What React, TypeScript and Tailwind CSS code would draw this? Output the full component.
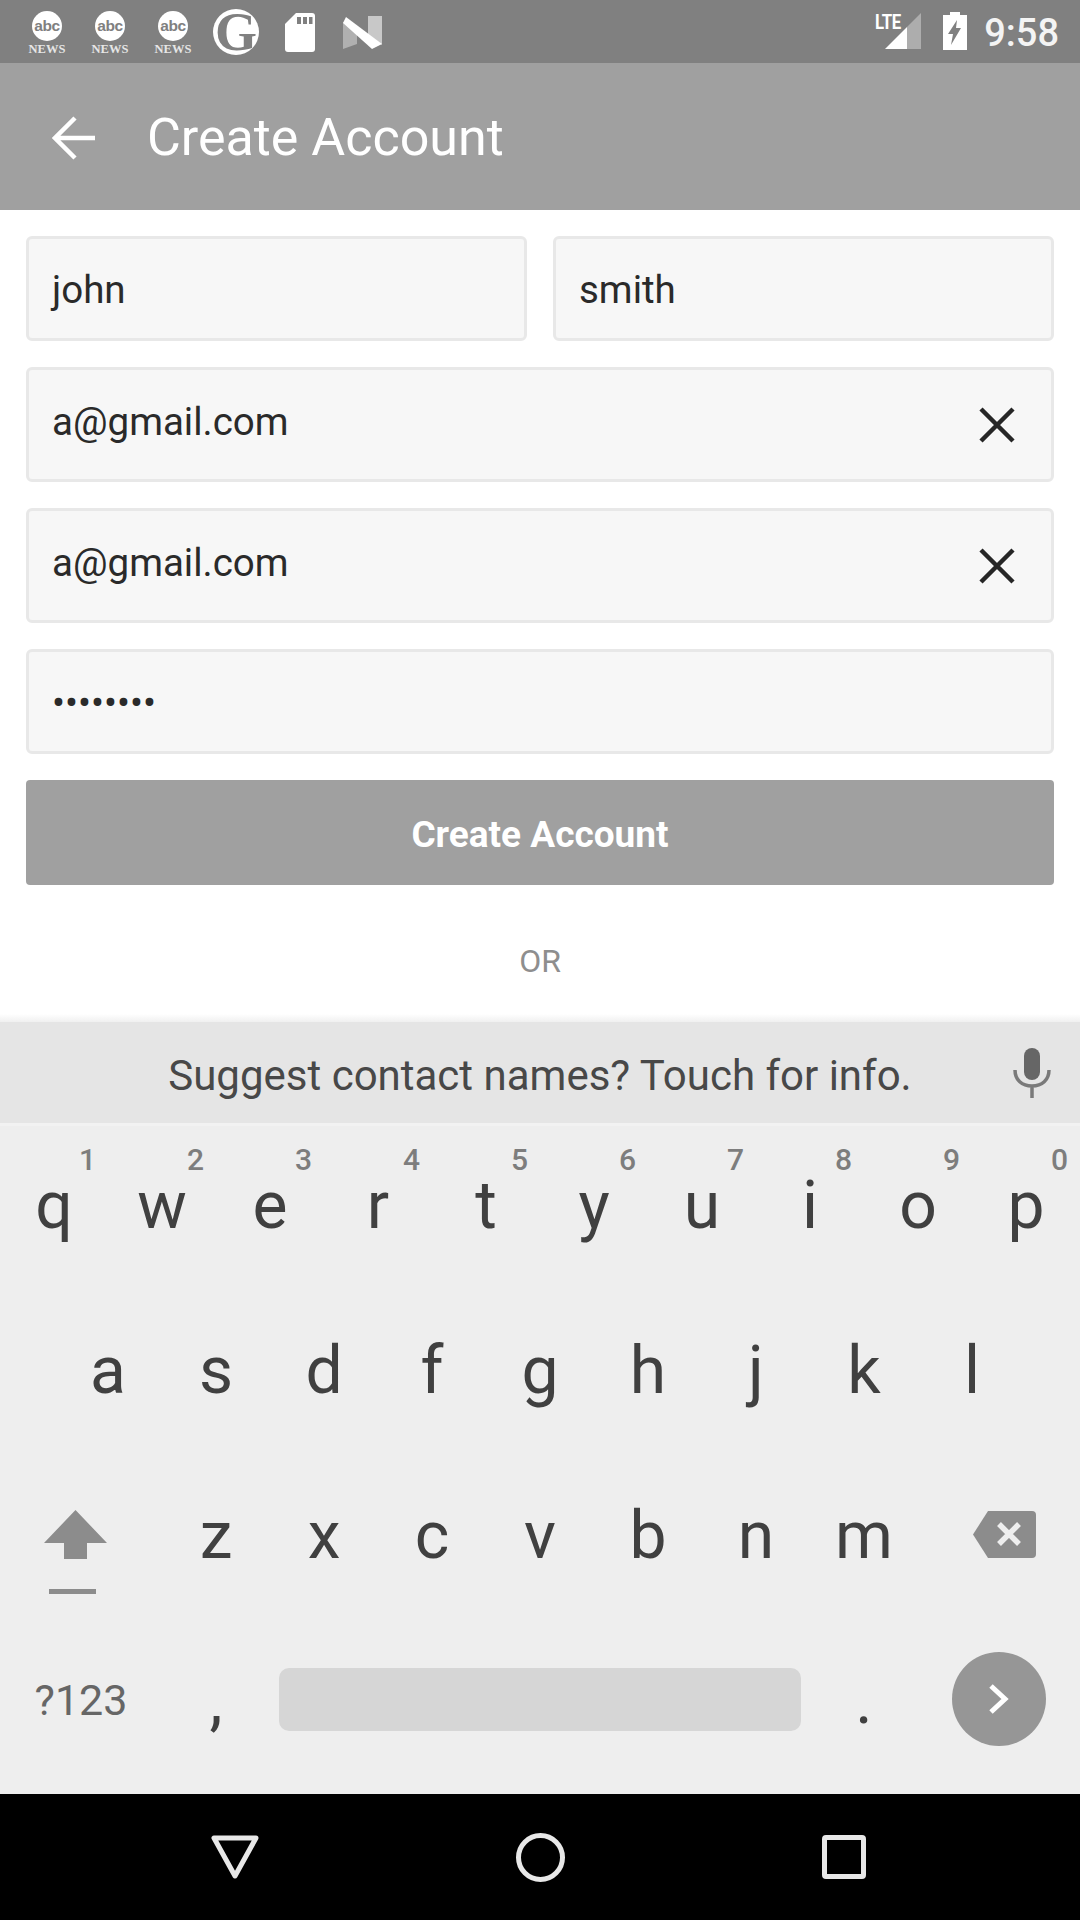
import React from "react";

const Abc = ({ className }: { className?: string }) => (
  <svg width="38" height="48" viewBox="0 0 38 48" className={className}>
    <circle cx="19" cy="15" r="15" fill="#fff" />
    <text x="19" y="20" textAnchor="middle" fontFamily="'Liberation Sans', sans-serif" fontWeight="700" fontSize="15.5" letterSpacing="-0.4" fill="#808080">abc</text>
    <text x="19" y="42" textAnchor="middle" fontFamily="'Liberation Serif', serif" fontSize="12.500" fontWeight="700" fill="#e6e6e6">NEWS</text>
  </svg>
);

const Guardian = () => (
  <svg width="64" height="64" viewBox="0 0 64 64" className="-m-[9px]">
    <circle cx="32" cy="32" r="23" fill="#fff" />
    <text x="32" y="50" textAnchor="middle" fontFamily="'Liberation Serif', serif" fontWeight="700" fontSize="54" fill="#808080">G</text>
  </svg>
);

const Sd = () => (
  <svg width="32" height="40" viewBox="0 0 32 40">
    <path d="M12 0H28a3 3 0 0 1 3 3V36a3 3 0 0 1-3 3H4a3 3 0 0 1-3-3V11Z" fill="#fff" />
    <path d="M13 4h4v7h-4zM19 4h4v7h-4zM25 4h3.500v7H25z" fill="#808080" />
  </svg>
);

const Nougat = () => (
  <svg width="39" height="34" viewBox="0 0 39 34">
    <path d="M0 6V33L14 28V12Z" fill="#b0b0b0" />
    <path d="M25 0L39 0V29L25 19Z" fill="#cfcfcf" opacity="0.9" />
    <path d="M3 1 L39 28 L29 33 L0 7Z" fill="#fff" />
  </svg>
);

const Signal = () => (
  <div className="relative w-[46px] h-[38px]">
    <span className="absolute left-[-1px] top-0 font-['Roboto'] text-[21px] leading-[18px] font-bold text-white scale-x-[0.8] origin-left tracking-tight">LTE</span>
    <svg width="36" height="36" viewBox="0 0 36 36" className="absolute left-[9px] top-0">
      <path d="M36 0V36H22V14Z" fill="#adadad" />
      <path d="M22 14V36H0Z" fill="#fff" />
    </svg>
  </div>
);

const Battery = () => (
  <svg width="24" height="38" viewBox="0 0 24 38">
    <path d="M7 0H17V3H24V38H0V3H7Z" fill="#fff" />
    <path d="M14 8L5 22H10L8 33L18 16H13Z" fill="#808080" />
  </svg>
);

const Clear = () => (
  <svg width="36" height="36" viewBox="0 0 36 36" className="shrink-0">
    <path d="M2 2L34 34M34 2L2 34" stroke="#262626" strokeWidth="4.500" fill="none" />
  </svg>
);

const Field = ({ value, height, clear, className, textClass }: { value: string; height: string; clear?: boolean; className?: string; textClass: string }) => (
  <div className={`flex items-center justify-between border-[3px] border-[#e8e8e8] bg-[#f7f7f7] rounded-[6px] pl-[23px] pr-[36px] font-['Roboto'] text-[38.5px] text-[#2a2a2a] ${height} ${className ?? ""}`}>
    <span className={`leading-none ${textClass}`}>{value}</span>
    {clear && <Clear />}
  </div>
);

const Key = ({ label, hint }: { label: string; hint?: string }) => (
  <div className="relative flex justify-center h-[165px] w-[108px] shrink-0">
    {hint && (
      <span className="absolute top-[19px] right-[12px] font-['Roboto'] text-[30px] leading-none font-medium text-[#7d7d7d]">{hint}</span>
    )}
    <span className="font-['Roboto'] text-[66px] leading-none text-[#404040] mt-[47px]">{label}</span>
  </div>
);

const row1 = [
  ["q", "1"], ["w", "2"], ["e", "3"], ["r", "4"], ["t", "5"],
  ["y", "6"], ["u", "7"], ["i", "8"], ["o", "9"], ["p", "0"],
];

export default function App() {
  return (
    <div className="w-[1080px] h-[1920px] flex flex-col bg-white overflow-hidden">
      {/* status bar */}
      <div className="h-[63px] bg-[#808080] flex items-start justify-between shrink-0">
        <div className="flex items-start">
          <Abc className="ml-[28px] mt-[11px]" />
          <Abc className="ml-[25px] mt-[11px]" />
          <Abc className="ml-[25px] mt-[11px]" />
          <div className="ml-[21px] mt-[9px] w-[46px] h-[46px]"><Guardian /></div>
          <div className="ml-[25px] mt-[13px]"><Sd /></div>
          <div className="ml-[27px] mt-[16px]"><Nougat /></div>
        </div>
        <div className="flex items-start">
          <div className="mt-[13px]"><Signal /></div>
          <div className="ml-[21px] mt-[12px]"><Battery /></div>
          <span className="ml-[17px] mr-[21px] mt-[11px] font-['Roboto'] text-[38px] leading-[44px] font-medium text-[#f4f4f4]">9:58</span>
        </div>
      </div>

      {/* app bar */}
      <div className="h-[147px] bg-[#a0a0a0] flex items-center shrink-0 pl-[52px]">
        <svg width="44" height="44" viewBox="0 0 44 44" className="shrink-0 mt-[2px]">
          <path d="M43 22H3M23 2L3 22L23 42" stroke="#fff" strokeWidth="4.500" fill="none" />
        </svg>
        <span className="ml-[51px] font-['Roboto'] text-[52px] leading-none text-white mt-[2px]">Create Account</span>
      </div>

      {/* form */}
      <div className="flex-1 min-h-0 px-[26px] pt-[26px] flex flex-col gap-[26px]">
        <div className="flex gap-[26px]">
          <Field value="john" height="h-[105px]" className="flex-1" textClass="mt-[4px]" />
          <Field value="smith" height="h-[105px]" className="flex-1" textClass="mt-[4px]" />
        </div>
        <Field value="a@gmail.com" height="h-[115px]" clear textClass="-mt-[4px]" />
        <Field value="a@gmail.com" height="h-[115px]" clear textClass="-mt-[4px]" />
        <Field value="••••••••" height="h-[105px]" textClass="mt-[4px]" />
        <div className="h-[105px] bg-[#a0a0a0] rounded-[4px] flex items-center justify-center font-['Roboto'] font-bold text-[37px] text-white">
          <span className="mt-[4px]">Create Account</span>
        </div>
        <div className="text-center font-['Roboto'] text-[32px] leading-none text-[#8e8e8e] mt-[34px]">OR</div>
      </div>

      {/* keyboard */}
      <div className="h-[8px] shrink-0 bg-gradient-to-b from-white to-[#f0f0f0]" />
      <div className="shrink-0 bg-[#eeeeee]">
        <div className="h-[101px] bg-[#e5e5e5] border-b-[3px] border-[#f2f2f2] box-content flex items-center relative justify-center">
          <span className="font-['Roboto'] text-[42px] leading-none text-[#484848] mt-[6px]">Suggest contact names? Touch for info.</span>
          <svg width="40" height="50" viewBox="0 0 40 50" className="absolute right-[28px] top-[26px]">
            <rect x="12" y="0" width="16" height="32" rx="8" fill="#666" />
            <path d="M3 22C3 32 10 38 20 38C30 38 37 32 37 22M20 38V50" stroke="#7a7a7a" strokeWidth="3.500" fill="none" />
          </svg>
        </div>
        <div className="flex">
          {row1.map(([l, h]) => <Key key={l} label={l} hint={h} />)}
        </div>
        <div className="flex pl-[54px]">
          {["a", "s", "d", "f", "g", "h", "j", "k", "l"].map((l) => <Key key={l} label={l} />)}
        </div>
        <div className="flex">
          <div className="w-[162px] h-[165px] shrink-0 pl-[44px] pt-[54px]">
            <svg width="63" height="84" viewBox="0 0 63 84">
              <path d="M31.500 0L63 33H43V49H20V33H0Z" fill="#8c8c8c" />
              <rect x="5" y="79" width="47" height="5" fill="#8c8c8c" />
            </svg>
          </div>
          {["z", "x", "c", "v", "b", "n", "m"].map((l) => <Key key={l} label={l} />)}
          <div className="w-[162px] h-[165px] shrink-0 pl-[55px] pt-[55px]">
            <svg width="63" height="47" viewBox="0 0 63 47">
              <path d="M15 0H59a4 4 0 0 1 4 4V43a4 4 0 0 1-4 4H15L0 23.500Z" fill="#8c8c8c" />
              <path d="M26 13L46 33M46 13L26 33" stroke="#eeeeee" strokeWidth="5.500" fill="none" />
            </svg>
          </div>
        </div>
        <div className="flex items-start h-[173px]">
          <div className="w-[162px] shrink-0 text-center font-['Roboto'] text-[43px] leading-none text-[#666666] mt-[58px]">?123</div>
          <Key label="," />
          <div className="w-[540px] shrink-0 px-[9px] mt-[47px]">
            <div className="h-[63px] rounded-[10px] bg-[#d6d6d6]" />
          </div>
          <Key label="." />
          <div className="w-[162px] shrink-0 pl-[34px] mt-[31px]">
            <div className="w-[94px] h-[94px] rounded-full bg-[#969696] flex items-center justify-center">
              <svg width="22" height="32" viewBox="0 0 22 32">
                <path d="M3 3L17 16L3 29" stroke="#fff" strokeWidth="5" fill="none" />
              </svg>
            </div>
          </div>
        </div>
      </div>

      {/* nav bar */}
      <div className="h-[126px] bg-black shrink-0 flex items-center justify-center relative">
        <div className="flex items-center gap-[257px] mr-[4px]">
          <svg width="48" height="44" viewBox="0 0 48 44">
            <path d="M3 3H45L24 41Z" stroke="#e8e8e8" strokeWidth="5" strokeLinejoin="round" fill="none" />
          </svg>
          <svg width="49" height="49" viewBox="0 0 49 49">
            <circle cx="24.500" cy="24.500" r="22" stroke="#e8e8e8" strokeWidth="5" fill="none" />
          </svg>
          <svg width="44" height="44" viewBox="0 0 44 44">
            <rect x="2.500" y="2.500" width="39" height="39" rx="1.500" stroke="#e8e8e8" strokeWidth="5" fill="none" />
          </svg>
        </div>
      </div>
    </div>
  );
}
